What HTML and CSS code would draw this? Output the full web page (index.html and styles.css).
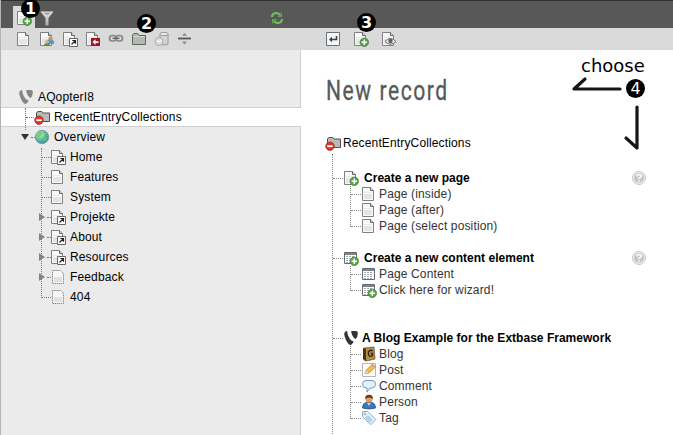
FILE: index.html
```html
<!DOCTYPE html>
<html lang="en">
<head>
<meta charset="utf-8">
<title>New record</title>
<link rel="stylesheet" href="styles.css">
</head>
<body>
<svg class="defs" width="0" height="0">
  <defs>
    <radialGradient id="globeFill" cx=".35" cy=".3" r=".8"><stop offset="0" stop-color="#d3f2d9"/><stop offset=".5" stop-color="#5dbd8c"/><stop offset="1" stop-color="#3182bd"/></radialGradient>
    <linearGradient id="grey" x2="0" y2="1"><stop offset="0" stop-color="#e6e6e6"/><stop offset="1" stop-color="#aaa"/></linearGradient>
    <symbol id="page" viewBox="0 0 16 16"><path d="M1.500 1.500h8l3 3v10h-11z" fill="#f9f9f9" stroke="#808080"/><path d="M9.500 1.500v3h3" fill="#ddd" stroke="#666"/><path d="M3 8h8v5H3z" fill="#e4e4e4"/><path d="M3 6.500h7" stroke="#e6e6e6"/></symbol>
    <symbol id="ghost" viewBox="0 0 16 16"><path d="M2.500 1.500h8l3 3v10h-11z" fill="#f6f6f6" stroke="#666" stroke-dasharray="1 1"/><path d="M4 8h8v5H4z" fill="#e0e0e0"/></symbol>
    <symbol id="plus" viewBox="0 0 16 16"><circle cx="11.300" cy="11.300" r="4.200" fill="#5aa34d" stroke="#428238" stroke-width=".8"/><path d="M11.300 8.600v5.400M8.600 11.300H14" stroke="#fff" stroke-width="1.500"/></symbol>
    <symbol id="newpage" viewBox="0 0 16 16"><use href="#page"/><use href="#plus"/></symbol>
    <symbol id="shortcut" viewBox="0 0 16 16"><use href="#page"/><path d="M7.500 7.500h8v8h-8z" fill="#fff" stroke="#666"/><path d="M9.500 13.500l3.500-3.500M10.300 9.500h3.200v3.200" fill="none" stroke="#222" stroke-width="1.200"/></symbol>
    <symbol id="userpage" viewBox="0 0 16 16"><use href="#page"/><path d="M8 11q0-3 3-3t4 3v2H8z" fill="#5596c9"/><circle cx="11.500" cy="7.500" r="2" fill="#c99452"/><path d="M5 15q0-3 3-3t3 3z" fill="#4d8f43"/><circle cx="8" cy="10.800" r="1.900" fill="#e0b06e"/></symbol>
    <symbol id="mount" viewBox="0 0 16 16"><use href="#page"/><path d="M6 7h9v8H6z" fill="#a31420"/><path d="M7.500 11l3-2.800v2h3v1.700h-3v2z" fill="#fff"/></symbol>
    <symbol id="folder" viewBox="0 0 16 16"><path d="M1.500 13.500V4.200l1.300-1.700h4l1.200 2h6.500v9z" fill="#b4b8b2" stroke="#5e625e"/><path d="M2.500 5.500h11" stroke="#d3d6d1"/></symbol>
    <symbol id="stopfolder" viewBox="0 0 16 16"><path d="M2.500 12.500V4l1.300-1.500h4l1.200 1.500h6.500v8.500z" fill="#b8bbb7" stroke="#4c504c"/><circle cx="5" cy="11.200" r="4.200" fill="#d93a2a" stroke="#a9261c" stroke-width=".8"/><path d="M2.300 11.200h5.400" stroke="#fff" stroke-width="1.800"/></symbol>
    <symbol id="typo3" viewBox="0 0 16 16"><path d="M4.200 1C2.500 1.300 1.500 2 1.300 3.500c-.3 3.300 3.200 11 6 11.500 1.200 0 2.500-1.700 3.500-3.600C7 11.200 4.200 5 4.200 1z"/><path d="M8.500 1.100h4c1.300.1 2.300.6 2.300 1.800 0 2.300-1 5.500-2.300 6C10.500 8.700 7.500 3 8.500 1.100z"/></symbol>
    <symbol id="globe" viewBox="0 0 16 16"><circle cx="8" cy="8" r="6.700" fill="url(#globeFill)" stroke="#759fa9"/><path d="M5 3q4-1 3 2t-4 3q-2-2 1-5zM9 8q4-1 4 2l-3 3q-2-2-1-5z" fill="#65c45b" opacity=".8"/></symbol>
    <symbol id="content" viewBox="0 0 16 16"><path d="M1.500 2.500h12v11h-12z" fill="#fff" stroke="#626a72"/><path d="M2 4h11" stroke="#7d858c" stroke-width="2"/><path d="M3 6.500h9M3 8.500h9M3 10.500h9M3 12.500h9" stroke="#a3aab0" stroke-dasharray="2 1"/></symbol>
    <symbol id="newcontent" viewBox="0 0 16 16"><use href="#content"/><use href="#plus"/></symbol>
    <symbol id="link" viewBox="0 0 16 16"><g fill="none" stroke="#858585" stroke-width="1.600"><rect x="1.500" y="4.500" width="6.500" height="5.500" rx="2.700"/><rect x="8" y="4.500" width="6.500" height="5.500" rx="2.700"/></g><path d="M4.500 7.300h7" stroke="#666" stroke-width="1.500"/></symbol>
    <symbol id="bin" viewBox="0 0 16 16"><path d="M6 3v10q4 2 8 0V3z" fill="#d4d4d4" stroke="#999"/><ellipse cx="10" cy="3" rx="4.300" ry="1.600" fill="#eee" stroke="#999"/><circle cx="5" cy="10.500" r="4" fill="#ddd" stroke="#aaa"/><path d="M3 9l2 2 3-2" fill="none" stroke="#fff"/></symbol>
    <symbol id="divider" viewBox="0 0 16 16"><path d="M1 7.500h13" stroke="#555" stroke-width="1.800"/><path d="M5 4.800L7.500 2 10 4.800zM5 10.500h5l-2.500 3z" fill="#888"/></symbol>
    <symbol id="back" viewBox="0 0 16 16"><path d="M1.500 1.500h13v13h-13z" fill="#f6f6f6" stroke="#687078"/><path d="M11.500 5v3.500H5" fill="none" stroke="#34424f" stroke-width="1.600"/><path d="M4 8.500l3-2.700v5.400z" fill="#34424f"/></symbol>
    <symbol id="view" viewBox="0 0 16 16"><use href="#page"/><path d="M4 10.500q5.500-6 11 0-5.500 5.500-11 0z" fill="#eee" stroke="#62676a"/><circle cx="9.500" cy="10" r="2.200" fill="#5b6267"/></symbol>
    <symbol id="help" viewBox="0 0 16 16"><circle cx="8" cy="8" r="6.500" fill="#f2f2f2" stroke="#c4c4c4"/><circle cx="8" cy="8" r="5" fill="#c6c6c6"/><path d="M6 6.500q.2-2 2-2t2 1.700q0 1-2 2v1M8 10.500V12" fill="none" stroke="#fff" stroke-width="1.600"/></symbol>
    <symbol id="book" viewBox="0 0 16 16"><path d="M3 2l10-1 1 12-9 2-2-1z" fill="#b58d48" stroke="#664718" stroke-width=".7"/><path d="M2 2l3 1v12l-3-2z" fill="#493320"/><path d="M11.500 5Q10 3.500 8.200 5t0 5Q10 11 11.500 9.500v-2H9.800" fill="none" stroke="#2d2113" stroke-width="1.300"/></symbol>
    <symbol id="post" viewBox="0 0 16 16"><path d="M1.500 1.500h13v13h-13z" fill="#fff" stroke="#b5b5b5"/><path d="M4 12l1-3.500L11.500 2l3 3-6.700 6z" fill="#f2bd48" stroke="#b67b22" stroke-width=".8"/><path d="M4 12l1-3.500 2.800 2.500z" fill="#efd4a0"/><path d="M11.500 2l3 3-1.200 1.100-3-3z" fill="#e09b81"/></symbol>
    <symbol id="comment" viewBox="0 0 16 16"><path d="M5 2.500h6q3.500 0 3.500 3.700T11 10H9l-3 4v-4H5Q1.500 10 1.500 6.200T5 2.500z" fill="#e4f2fd" stroke="#6c9dc8"/></symbol>
    <symbol id="person" viewBox="0 0 16 16"><path d="M1.500 14q0-6 6.500-6t6.500 6q-6.500 2-13 0z" fill="#3b78bd" stroke="#234f87" stroke-width=".8"/><circle cx="8" cy="5" r="3.600" fill="#df9e62"/><path d="M4 5q0-4.300 4-4.300T12 5Q8 2 4 5z" fill="#6b3a18"/><path d="M6 9h4l-2 3z" fill="#f0c8a0"/></symbol>
    <symbol id="tag" viewBox="0 0 16 16"><path d="M1.500 1.500h5.300l8 8-5 5.200-8.300-8z" fill="#edf5fa" stroke="#91aab9"/><path d="M7 5l5 5-3 2.700-5-5z" fill="#a9d3ef"/><circle cx="4" cy="4" r="1" fill="#fff" stroke="#7890a0" stroke-width=".7"/></symbol>
    <symbol id="filter" viewBox="0 0 16 16"><path d="M1.500 1.500h13L9.500 8v7.500h-3V8z" fill="url(#grey)"/><path d="M4 2.800h8L8 5z" fill="#999"/></symbol>
    <symbol id="refresh" viewBox="0 0 16 16"><path d="M3 7q0-4 5-4l3 1.500M13 9q0 4-5 4l-3-1.500" fill="none" stroke="#73bb61" stroke-width="2.200"/><path d="M13 2v5H8zM3 14V9h5z" fill="#58a747"/></symbol>
  </defs>
</svg>

<div class="app">
  <header class="topbar">
    <span class="tab"><svg class="icon"><use href="#newpage"/></svg></span>
    <svg class="icon filter"><use href="#filter"/></svg>
    <svg class="icon refresh"><use href="#refresh"/></svg>
  </header>
  <div class="toolbar">
    <div class="tools">
      <svg class="icon"><use href="#page"/></svg>
      <svg class="icon"><use href="#userpage"/></svg>
      <svg class="icon"><use href="#shortcut"/></svg>
      <svg class="icon"><use href="#mount"/></svg>
      <svg class="icon"><use href="#link"/></svg>
      <svg class="icon"><use href="#folder"/></svg>
      <svg class="icon"><use href="#bin"/></svg>
      <svg class="icon"><use href="#divider"/></svg>
    </div>
    <div class="doc-tools">
      <svg class="icon"><use href="#back"/></svg>
      <svg class="icon"><use href="#newpage"/></svg>
      <svg class="icon"><use href="#view"/></svg>
    </div>
  </div>
  <div class="columns">
    <nav class="tree">
      <div class="row root"><svg class="icon logo"><use href="#typo3"/></svg><span>AQopterI8</span></div>
      <div class="branch">
        <div class="row selected"><svg class="icon"><use href="#stopfolder"/></svg><span>RecentEntryCollections</span></div>
        <div class="row open"><svg class="icon"><use href="#globe"/></svg><span>Overview</span></div>
      </div>
      <div class="branch leaves">
        <div class="row"><svg class="icon"><use href="#shortcut"/></svg><span>Home</span></div>
        <div class="row"><svg class="icon"><use href="#page"/></svg><span>Features</span></div>
        <div class="row"><svg class="icon"><use href="#page"/></svg><span>System</span></div>
        <div class="row closed"><svg class="icon"><use href="#shortcut"/></svg><span>Projekte</span></div>
        <div class="row closed"><svg class="icon"><use href="#shortcut"/></svg><span>About</span></div>
        <div class="row closed"><svg class="icon"><use href="#shortcut"/></svg><span>Resources</span></div>
        <div class="row closed"><svg class="icon"><use href="#ghost"/></svg><span>Feedback</span></div>
        <div class="row"><svg class="icon"><use href="#ghost"/></svg><span>404</span></div>
      </div>
    </nav>
    <main class="content">
      <h1><span>New record</span></h1>
      <div class="record"><svg class="icon"><use href="#stopfolder"/></svg><span>RecentEntryCollections</span></div>
      <div class="groups">
        <section class="group">
          <div class="record head"><svg class="icon"><use href="#newpage"/></svg><span>Create a new page</span><svg class="icon help"><use href="#help"/></svg></div>
          <div class="items">
            <div class="record"><svg class="icon"><use href="#page"/></svg><span>Page (inside)</span></div>
            <div class="record"><svg class="icon"><use href="#page"/></svg><span>Page (after)</span></div>
            <div class="record"><svg class="icon"><use href="#page"/></svg><span>Page (select position)</span></div>
          </div>
        </section>
        <section class="group">
          <div class="record head"><svg class="icon"><use href="#newcontent"/></svg><span>Create a new content element</span><svg class="icon help"><use href="#help"/></svg></div>
          <div class="items">
            <div class="record"><svg class="icon"><use href="#content"/></svg><span>Page Content</span></div>
            <div class="record"><svg class="icon"><use href="#newcontent"/></svg><span>Click here for wizard!</span></div>
          </div>
        </section>
        <section class="group blog">
          <div class="record head"><svg class="icon"><use href="#typo3"/></svg><span>A Blog Example for the Extbase Framework</span></div>
          <div class="items">
            <div class="record"><svg class="icon"><use href="#book"/></svg><span>Blog</span></div>
            <div class="record"><svg class="icon"><use href="#post"/></svg><span>Post</span></div>
            <div class="record"><svg class="icon"><use href="#comment"/></svg><span>Comment</span></div>
            <div class="record"><svg class="icon"><use href="#person"/></svg><span>Person</span></div>
            <div class="record"><svg class="icon"><use href="#tag"/></svg><span>Tag</span></div>
          </div>
        </section>
      </div>
    </main>
  </div>
  <span class="badge one">1</span>
  <span class="badge two">2</span>
  <span class="badge three">3</span>
  <span class="badge four">4</span>
  <span class="choose">choose</span>
  <svg class="arrows" width="80" height="80"><path d="M50 14H4L15 4M67 32V73L56 63" fill="none" stroke="#151515" stroke-width="3.200" stroke-linecap="round" stroke-linejoin="round"/></svg>
</div>
</body>
</html>
```

FILE: styles.css
```css
* { box-sizing: border-box; }
body { margin: 0; background: #fff; font: 12px/16px "Liberation Sans", Arial, sans-serif; letter-spacing: .14px; color: #000; }
.defs { position: absolute; }
.app { position: relative; display: flex; flex-direction: column; width: 673px; height: 435px; overflow: hidden; border-left: 1px solid #b4b4b4; }
.icon { width: 16px; height: 16px; flex: none; }

.topbar { height: 28px; background: #585858; border-top: 1px solid #303030; display: flex; padding: 5px 0 0 12px; }
.tab { width: 22px; background: #dadada; padding: 4px 0 0 3px; }
.filter { margin: 4px 0 0 4px; }
.refresh { margin: 4px 0 0 214px; }

.toolbar { height: 22px; background: #dadada; display: flex; align-items: center; padding-bottom: 1px; }
.tools { width: 324px; padding-left: 15px; display: flex; gap: 7px; }
.doc-tools { display: flex; gap: 12px; }

.columns { flex: 1; display: flex; min-height: 0; }
.tree { width: 300px; flex: none; background: #ebebeb; border-right: 1px solid #d0d0d0; padding-top: 37px; }
.row { position: relative; height: 20px; display: flex; align-items: center; gap: 4px; padding-left: 33px; white-space: nowrap; }
.row span, .record span { position: relative; }
.root { padding-left: 17px; }
.logo { fill: #858585; }
.branch { position: relative; }
.leaves .row { padding-left: 49px; }
.selected { width: 300px; background: #fff linear-gradient(#d0d0d0, #d0d0d0) top / 100% 1px no-repeat; border-bottom: 1px solid #d0d0d0; }
.branch::before { content: ""; position: absolute; z-index: 1; left: 24px; top: 1px; height: 22px; border-left: 1px dotted #777; }
.leaves::before { left: 40px; top: 1px; height: 150px; }
.row:not(.root)::before { content: ""; position: absolute; left: 25px; top: 10px; width: 8px; border-top: 1px dotted #777; }
.leaves .row::before { left: 41px; width: 9px; }
.row.open::before { left: 30px; width: 4px; }
.leaves .row.closed::before { left: 46px; width: 4px; }
.open::after { content: ""; position: absolute; left: 20px; top: 7px; border: solid transparent; border-width: 6px 4.5px 0; border-top-color: #333; }
.closed::after { content: ""; position: absolute; z-index: 2; left: 38px; top: 5px; width: 6px; height: 10px; background: linear-gradient(#858585, #858585); clip-path: polygon(0 10%, 100% 50%, 0 90%); }

.content { flex: 1; padding-left: 24px; min-width: 0; }
h1 { margin: 23px 0 43px; height: 36px; font: 27px/36px Roboto, "Open Sans", sans-serif; letter-spacing: 2px; color: #585858; padding-left: 1px; -webkit-text-stroke: .3px #585858; }
h1 span { display: inline-block; transform: scaleX(.78); transform-origin: 0 50%; }
.record { position: relative; display: flex; align-items: center; height: 16px; gap: 2px; white-space: nowrap; }
.content > .record { margin-top: -17px; }
.groups { position: relative; padding: 19px 0 0 18px; }
.groups::before { content: ""; position: absolute; left: 7px; top: 3px; height: 290px; border-left: 1px dotted #888; }
.group { margin-bottom: 16px; }
.blog { margin-top: 32px; }
.head { font-weight: bold; gap: 5px; letter-spacing: .02px; }
.blog .head { gap: 3px; fill: #333; }
.help { position: absolute; left: 288px; }
.items { position: relative; padding-left: 18px; color: #333; }
.items .record { gap: 2px; }
.items::before { content: ""; position: absolute; left: 7px; top: 0; bottom: 7px; border-left: 1px dotted #888; }
.head::before, .items .record::before { content: ""; position: absolute; left: -10px; top: 8px; width: 10px; border-top: 1px dotted #888; }

.badge { position: absolute; width: 19px; height: 19px; border-radius: 50%; background: #000; color: #fff; font: bold 16px/19px "DejaVu Sans", sans-serif; text-align: center; letter-spacing: 0; }
.one { left: 20px; top: -1px; }
.two { left: 136px; top: 14px; }
.three { left: 356px; top: 13px; }
.four { left: 625px; top: 79px; font-weight: normal; }
.choose { position: absolute; left: 580px; top: 55px; font: 18px/22px "DejaVu Sans", sans-serif; letter-spacing: 0; }
.arrows { position: absolute; left: 569px; top: 75px; }
```
